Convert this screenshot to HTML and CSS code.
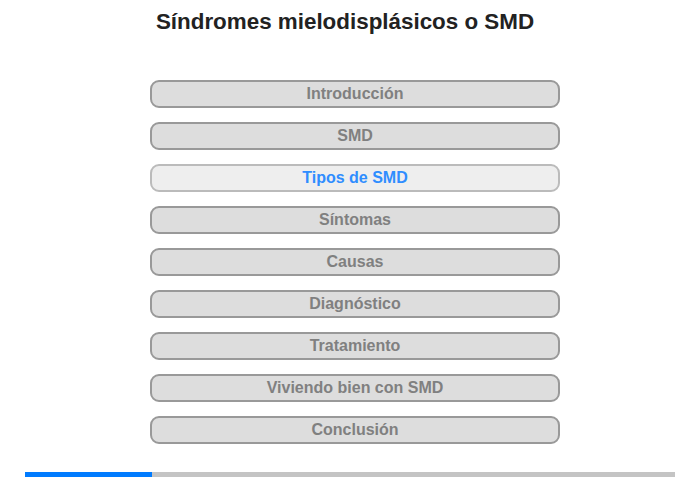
FILE: index.html
```html
<!DOCTYPE html>
<html lang="es">
<head>
  <meta charset="UTF-8" />
  <meta name="viewport" content="width=device-width, initial-scale=1.0"/>
  <title>Síndromes mielodisplásicos o SMD</title>
  <link rel="stylesheet" href="styles.css">
</head>
<body>
  <div class="page">
    <h1>Síndromes mielodisplásicos o SMD</h1>
    <nav class="menu">
      <button class="item">Introducción</button>
      <button class="item">SMD</button>
      <button class="item active">Tipos de SMD</button>
      <button class="item">Síntomas</button>
      <button class="item">Causas</button>
      <button class="item">Diagnóstico</button>
      <button class="item">Tratamiento</button>
      <button class="item">Viviendo bien con SMD</button>
      <button class="item">Conclusión</button>
    </nav>
    <div class="progress">
      <div class="progress-fill" style="width: 19.5%"></div>
    </div>
  </div>
</body>
</html>
```

FILE: styles.css
```css
body {
  margin: 0;
  font-family: "Liberation Sans", Arial, sans-serif;
  background: #fff;
}

.page {
  width: 700px;
  height: 480px;
  display: flex;
  flex-direction: column;
  align-items: center;
}

h1 {
  margin: 9px 0 0;
  padding-right: 10px;
  font-size: 22.4px;
  line-height: 26px;
  color: #222;
  text-align: center;
}

.menu {
  margin-top: 45px;
  margin-left: 10px;
  display: flex;
  flex-direction: column;
  gap: 14px;
}

.item {
  width: 410px;
  height: 28px;
  padding: 0;
  background: #ddd;
  border: 2px solid #999;
  border-radius: 9px;
  font-family: inherit;
  font-size: 16px;
  font-weight: bold;
  color: #808080;
  cursor: pointer;
}

.item.active {
  background: #eee;
  border-color: #bbb;
  color: #2f8dff;
}

.progress {
  margin-top: auto;
  margin-bottom: 3px;
  width: 650px;
  height: 5px;
  background: #c4c4c4;
}

.progress-fill {
  height: 100%;
  background: #007bff;
}
```
